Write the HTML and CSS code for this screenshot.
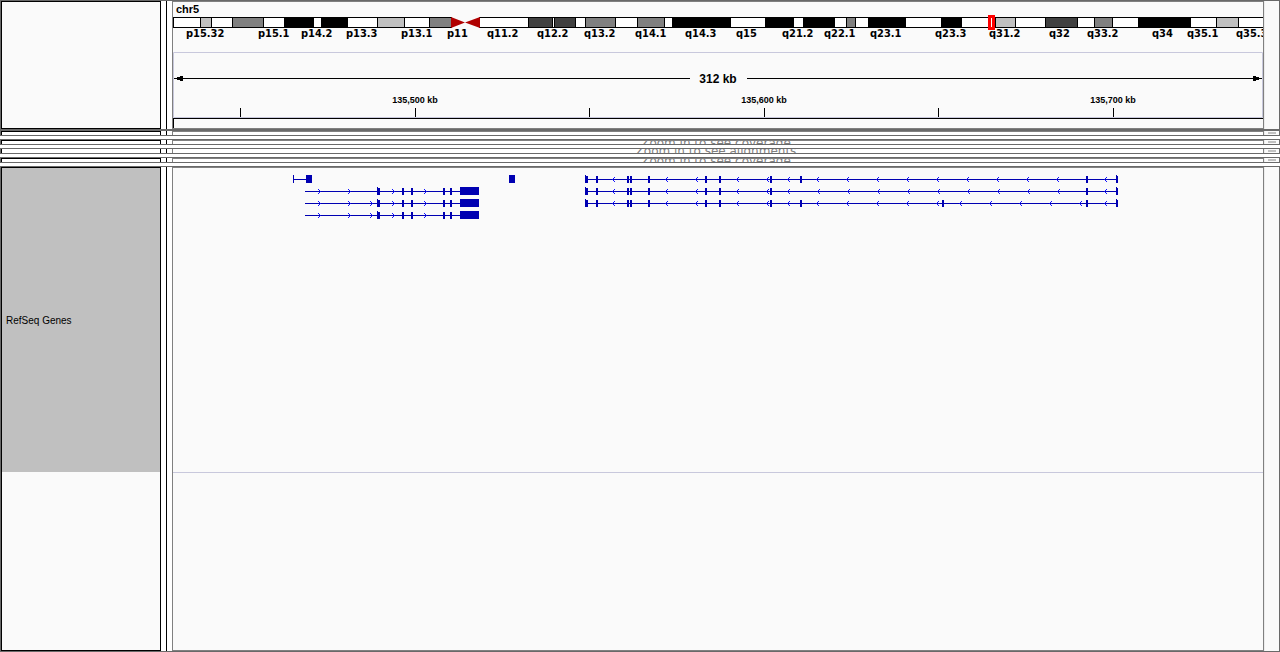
FILE: index.html
```html
<!DOCTYPE html>
<html lang="en">
<head>
<meta charset="utf-8">
<title>Genome browser - chr5</title>
<link rel="stylesheet" href="styles.css">
</head>
<body>
<main class="browser">
  <header class="row">
    <div class="names"></div>
    <div class="divider"></div>
    <div class="data">
      <svg class="plot" viewBox="173 2 1090 50" role="img" aria-label="Chromosome 5 ideogram">
        <text class="chrom" x="176" y="13">chr5</text>
        <path class="ink" d="M173 17H452V28H173zM479 17H1264V28H479z"/>
        <path class="paper" d="M174 18h26v9h-26zM212 18h20v9h-20zM264 18h20v9h-20zM314 18h7v9h-7zM348 18h29v9h-29zM405 18h24v9h-24zM480 18h48v9h-48zM553 18h1v9h-1zM576 18h9v9h-9zM616 18h21v9h-21zM665 18h7v9h-7zM731 18h34v9h-34zM794 18h9v9h-9zM835 18h11v9h-11zM856 18h12v9h-12zM906 18h35v9h-35zM962 18h33v9h-33zM1016 18h29v9h-29zM1078 18h16v9h-16zM1113 18h25v9h-25zM1191 18h25v9h-25zM1239 18h25v9h-25z"/>
        <path class="band-light" d="M201 18h10v9h-10zM378 18h26v9h-26zM996 18h19v9h-19zM1217 18h21v9h-21z"/>
        <path class="band-mid" d="M233 18h30v9h-30zM430 18h21v9h-21zM586 18h29v9h-29zM638 18h26v9h-26zM847 18h8v9h-8zM1095 18h17v9h-17z"/>
        <path class="band-dark" d="M529 18h23v9h-23zM555 18h20v9h-20zM1046 18h31v9h-31z"/>
        <path class="centromere" d="M451 17L465 22.500L451 28zM480 17L465 22.500L480 28z"/>
        <path class="locus" d="M988 15h7v15h-7z"/>
        <path class="paper" d="M991 18h1v9h-1z"/>
        <g class="bands">
          <text x="186" y="37">p15.32</text><text x="258" y="37">p15.1</text><text x="301" y="37">p14.2</text>
          <text x="346" y="37">p13.3</text><text x="401" y="37">p13.1</text><text x="447" y="37">p11</text>
          <text x="487" y="37">q11.2</text><text x="537" y="37">q12.2</text><text x="584" y="37">q13.2</text>
          <text x="635" y="37">q14.1</text><text x="685" y="37">q14.3</text><text x="736" y="37">q15</text>
          <text x="782" y="37">q21.2</text><text x="824" y="37">q22.1</text><text x="870" y="37">q23.1</text>
          <text x="935" y="37">q23.3</text><text x="989" y="37">q31.2</text><text x="1049" y="37">q32</text>
          <text x="1087" y="37">q33.2</text><text x="1152" y="37">q34</text><text x="1187" y="37">q35.1</text>
          <text x="1236" y="37">q35.3</text>
        </g>
      </svg>
      <svg class="plot" viewBox="173 52 1090 66" role="img" aria-label="Ruler, 312 kb">
        <path class="frame" d="M173.500 52.500H1262.500V117.500H173.500z"/>
        <path class="tick" d="M176 78.500H690M747 78.500H1260M240.500 108v9M415.500 108v9M589.500 108v9M764.500 108v9M938.500 108v9M1113.500 108v9"/>
        <path class="ink" d="M174 78.500l9-3v6zM1262 78.500l-9-3v6z"/>
        <text class="span" x="718" y="83">312 kb</text>
        <text class="pos" x="415" y="103">135,500 kb</text>
        <text class="pos" x="764" y="103">135,600 kb</text>
        <text class="pos" x="1113" y="103">135,700 kb</text>
      </svg>
      <div class="strip"></div>
    </div>
    <div class="gutter"></div>
  </header>

  <section class="row small">
    <div class="names"></div><div class="divider"></div>
    <div class="data"></div>
    <div class="gutter"><span class="thumb"></span></div>
  </section>
  <section class="row small">
    <div class="names"></div><div class="divider"></div>
    <div class="data"><span class="hint">Zoom in to see coverage</span></div>
    <div class="gutter"><span class="thumb"></span></div>
  </section>
  <section class="row small scrolled">
    <div class="names"></div><div class="divider"></div>
    <div class="data"><span class="hint">Zoom in to see alignments</span></div>
    <div class="gutter"><span class="thumb"></span></div>
  </section>
  <section class="row small">
    <div class="names"></div><div class="divider"></div>
    <div class="data"><span class="hint">Zoom in to see coverage</span></div>
    <div class="gutter"><span class="thumb"></span></div>
  </section>

  <section class="row genes">
    <div class="names"><div class="track-name">RefSeq Genes</div></div>
    <div class="divider"></div>
    <div class="data">
      <div class="track">
        <svg class="plot" viewBox="173 168 1090 304" role="img" aria-label="RefSeq gene models">
          <defs>
            <marker id="strand" viewBox="0 0 5 7" refX="3" refY="3.500" markerWidth="5" markerHeight="7" orient="auto">
              <path class="chevron" d="M1 1L3.500 3.500L1 6"/>
            </marker>
          </defs>
          <g class="intron">
            <path d="M293 179.500H306"/>
            <path d="M305 191.500H320H350H394H426H460"/>
            <path d="M305 203.500H320H350H372H394H426H460"/>
            <path d="M305 215.500H320H350H372H394H426H460"/>
            <path d="M1117 179.500H1105H1057H1027H997H967H937H907H877H847H817H788H767H737H696H666H648H613H586"/>
            <path d="M1117 191.500H1105H1058H1028H998H968H938H908H878H848H818H788H767H737H696H666H648H613H586"/>
            <path d="M1117 203.500H1105H1080H1050H1020H990H960H937H907H877H847H817H788H767H737H696H666H648H613H586"/>
          </g>
          <path class="exon" d="M293 175h1v8h-1zM306 175h6v8h-6zM509 175h6v8h-6zM460 187h19v8h-19zM460 199h19v8h-19zM460 211h19v8h-19zM377 187h1v1h2v7h-3zM377 199h1v1h2v7h-3zM377 211h1v1h2v7h-3zM585 175h1v1h2v7h-3zM585 187h1v1h2v7h-3zM585 199h1v1h2v7h-3z"/>
          <g class="exon-thin">
            <path d="M403 188v7M412 188v7M444 188v7M451 188v7"/>
            <path d="M403 200v7M412 200v7M444 200v7M451 200v7"/>
            <path d="M403 212v7M412 212v7M444 212v7M451 212v7"/>
            <path d="M597 176v7M628 176v7M631 176v7M649 176v7M706 176v7M720 176v7M771 176v7M801 176v7M1087 176v7M1117 176v7"/>
            <path d="M597 188v7M628 188v7M631 188v7M649 188v7M706 188v7M720 188v7M771 188v7M1087 188v7M1117 188v7"/>
            <path d="M597 200v7M628 200v7M631 200v7M649 200v7M706 200v7M720 200v7M771 200v7M801 200v7M943 200v7M1087 200v7M1117 200v7"/>
          </g>
          <path class="exon" d="M1116 175h1v1h-1zM1116 187h1v1h-1zM1116 199h1v1h-1z"/>
        </svg>
      </div>
    </div>
    <div class="gutter"></div>
  </section>
</main>
</body>
</html>
```
FILE: styles.css
```css
* { box-sizing: border-box; }
body {
  margin: 0;
  background: #fff;
  color: #000;
  font-family: "Liberation Sans", Arial, sans-serif;
}
.browser {
  display: flex;
  flex-direction: column;
  min-height: 100vh;
}
.row {
  display: grid;
  grid-template-columns: 160px 11px minmax(0, 1fr) 15px;
  border: 1px solid #696969;
}
.names {
  border: 1px solid #000;
  background: #fafafa;
}
.divider {
  margin: 0 5px;
  background: #000;
}
.data {
  min-width: 0;
  overflow: hidden;
  border: 1px solid #808080;
  background: #fafafa;
}
.gutter {
  border-left: 1px solid #ececec;
  background: #fafafa;
}
.plot {
  display: block;
  width: 100%;
  height: auto;
}
.strip {
  height: 10px;
  border-top: 1px solid #000;
  border-left: 1px solid #000;
}

/* collapsed tracks */
.small {
  height: 6px;
  margin-bottom: 3px;
}
.small .names,
.small .data {
  border-bottom: 0;
  background: #fff;
}
.scrolled .names,
.scrolled .data { border-top: 0; }
.small .data {
  display: flex;
  align-items: center;
  justify-content: center;
  padding-right: 4px;
}
.small .gutter {
  display: flex;
  padding: 1px 3px;
}
.thumb {
  flex: 1;
  height: 2px;
  background: #c0c0c0;
}
.hint {
  color: #808080;
  font: 12px/14px "DejaVu Sans", sans-serif;
  white-space: nowrap;
}

/* gene track */
.genes { flex: 1; }
.track-name {
  display: flex;
  align-items: center;
  height: 304px;
  padding: 2px 0 0 4px;
  background: #c0c0c0;
  font-size: 10px;
  line-height: 12px;
}
.track { border-bottom: 1px solid #c8c8dc; }

/* drawing */
.ink { fill: #000; }
.paper { fill: #fff; }
.band-light { fill: #c0c0c0; }
.band-mid { fill: #808080; }
.band-dark { fill: #404040; }
.centromere { fill: #b00000; }
.locus { fill: #f00; }
.ink, .paper, .band-light, .band-mid, .band-dark, .locus, .exon { shape-rendering: crispEdges; }
.frame { fill: none; stroke: #c8c8dc; }
.tick { fill: none; stroke: #000; }
.chrom { font-size: 11px; font-weight: bold; }
.bands { font: bold 11px "DejaVu Sans Condensed", "DejaVu Sans", sans-serif; }
.span { font-size: 12px; font-weight: bold; text-anchor: middle; }
.pos { font-size: 9px; font-weight: bold; text-anchor: middle; }
.intron path {
  fill: none;
  stroke: #0000b2;
  marker-mid: url(#strand);
}
.intron path:first-child { marker-mid: none; }
.intron ~ .exon, .exon { fill: #0000b2; }
.chevron { fill: none; stroke: #1414ff; }
.exon-thin { fill: none; stroke: #0000b2; stroke-width: 2; }
```
